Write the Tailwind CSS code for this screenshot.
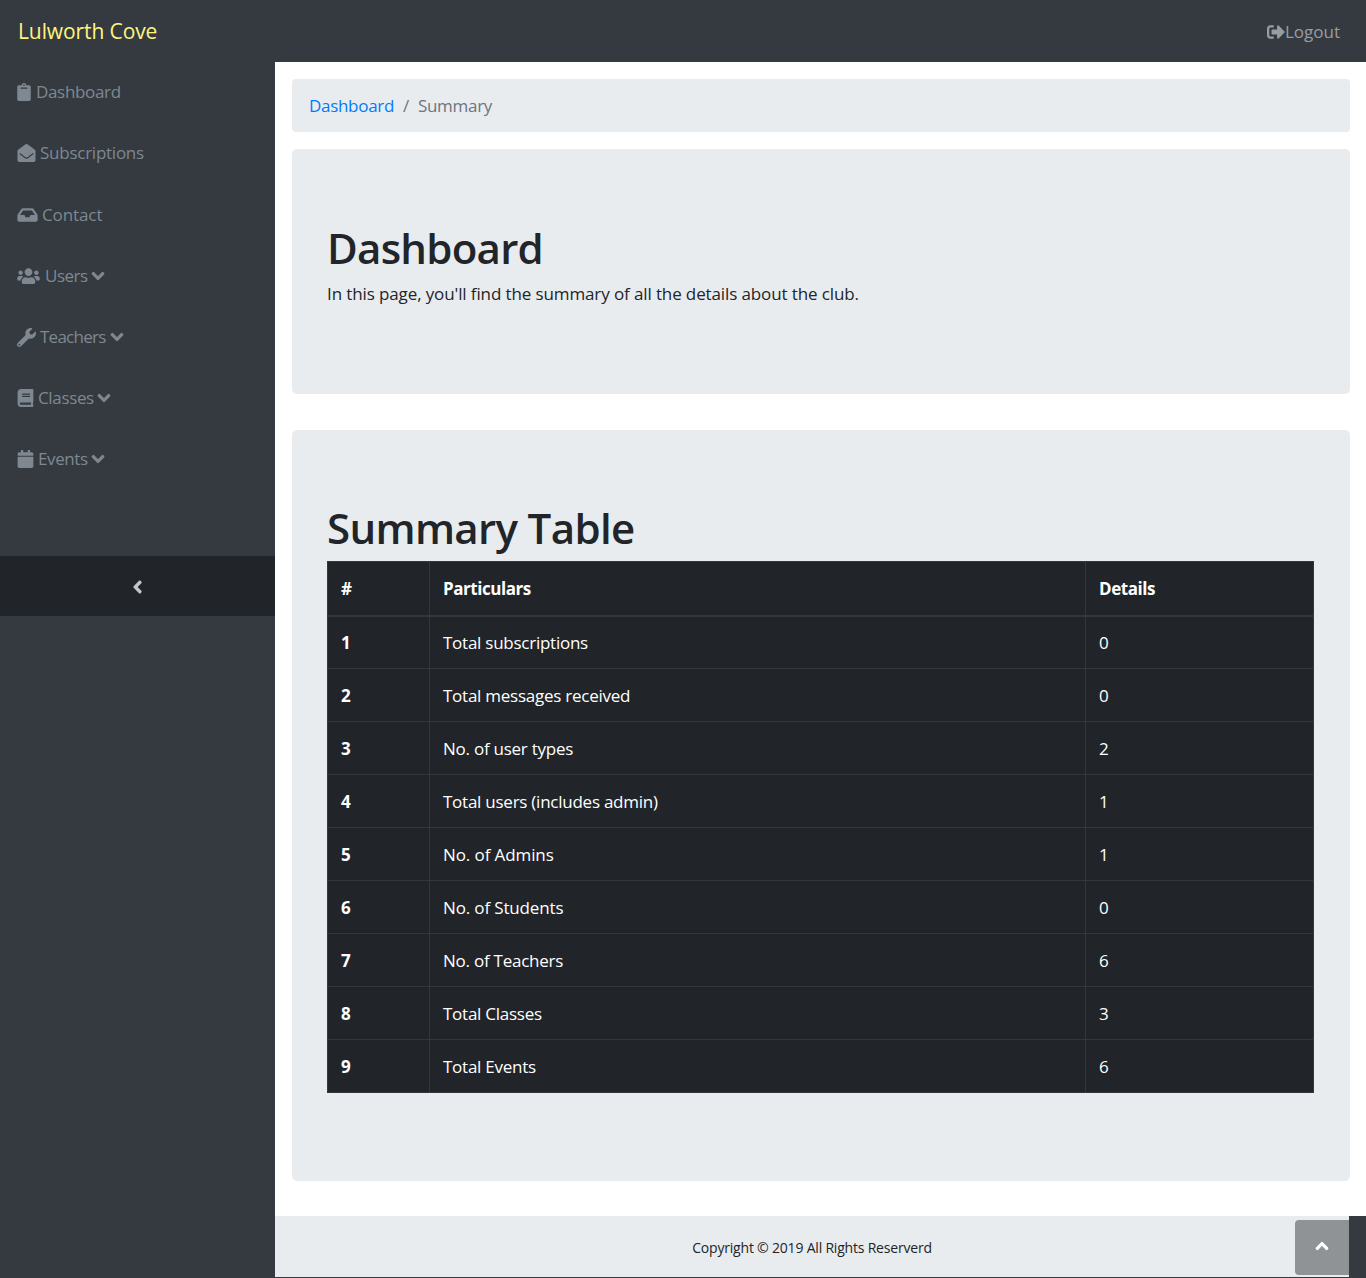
<!DOCTYPE html>
<html lang="en">
<head>
<meta charset="utf-8">
<title>Lulworth Cove</title>
<script src="https://cdn.jsdelivr.net/npm/@tailwindcss/browser@4"></script>
</head>
<body class="bg-[#343a40] font-['Open_Sans','Noto_Sans',sans-serif] text-[17px] text-[#212529] overflow-hidden">
<div class="w-[1366px] h-[1278px] flex flex-col">
  <header class="h-[62px] shrink-0 flex items-center justify-between pl-[18px] pr-[26px] bg-[#343a40]">
    <a class="text-[21px] mt-[2px] text-[#fff47f] tracking-[-0.1px]">Lulworth Cove</a>
    <a class="flex items-center text-[17px] mt-[1px] text-[#9a9da0] tracking-[0px]">
      <svg class="w-[18px] h-[18px] fill-[#9a9da0]" viewBox="0 0 512 512"><path d="M497 273L329 441c-15 15-41 4.5-41-17v-96H152c-13.3 0-24-10.7-24-24v-96c0-13.3 10.7-24 24-24h136V88c0-21.4 25.9-32 41-17l168 168c9.3 9.4 9.3 24.6 0 34zM192 436v-40c0-6.6-5.4-12-12-12H96c-17.7 0-32-14.3-32-32V160c0-17.7 14.3-32 32-32h84c6.6 0 12-5.4 12-12V76c0-6.6-5.4-12-12-12H96c-53 0-96 43-96 96v192c0 53 43 96 96 96h84c6.6 0 12-5.4 12-12z"/></svg>Logout</a>
  </header>
  <div class="flex flex-1 min-h-0">
    <aside class="w-[275px] shrink-0 bg-[#343a40] flex flex-col">
      <nav class="h-[494px] flex flex-col text-[17px] text-[#7f8890]">
        <a class="h-[60px] flex items-center gap-[5px] pl-[17px] tracking-[-0.33px]"><svg class="h-[18px] w-[14px] fill-[#7f8890]" viewBox="0 0 384 512"><path d="M384 112v352c0 26.51-21.49 48-48 48H48c-26.51 0-48-21.49-48-48V112c0-26.51 21.49-48 48-48h80c0-35.29 28.71-64 64-64s64 28.71 64 64h80c26.51 0 48 21.49 48 48zM192 40c-13.255 0-24 10.745-24 24s10.745 24 24 24 24-10.745 24-24-10.745-24-24-24m96 114v-20a6 6 0 0 0-6-6H102a6 6 0 0 0-6 6v20a6 6 0 0 0 6 6h180a6 6 0 0 0 6-6z"/></svg>Dashboard</a>
        <a class="h-[62px] flex items-center gap-[4px] pl-[17px] tracking-[-0.25px]"><svg class="h-[18px] w-[19px] fill-[#7f8890]" viewBox="0 0 512 512"><path d="M512 464c0 26.51-21.49 48-48 48H48c-26.51 0-48-21.49-48-48V200.724a48 48 0 0 1 18.387-37.776c24.913-19.529 45.501-35.365 164.2-121.511C199.412 29.17 232.797-.347 256 .003c23.198-.354 56.596 29.172 73.413 41.433 118.687 86.137 139.303 101.995 164.2 121.512A48 48 0 0 1 512 200.724V464zm-65.666-196.605c-2.563-3.728-7.7-4.595-11.339-1.907-22.845 16.873-55.462 40.705-105.582 77.079-16.825 12.266-50.21 41.781-73.413 41.43-23.211.344-56.559-29.143-73.413-41.43-50.114-36.37-82.734-60.204-105.582-77.079-3.639-2.688-8.776-1.821-11.339 1.907l-9.072 13.196a7.998 7.998 0 0 0 1.839 10.967c22.887 16.899 55.454 40.69 105.303 76.868 20.274 14.781 56.524 47.813 92.264 47.573 35.724.242 71.961-32.771 92.263-47.573 49.85-36.179 82.418-59.97 105.303-76.868a7.998 7.998 0 0 0 1.839-10.967l-9.071-13.196z"/></svg>Subscriptions</a>
        <a class="h-[62px] flex items-center gap-[4px] pl-[17px] tracking-[-0.1px]"><svg class="h-[18px] w-[21px] fill-[#7f8890]" viewBox="0 0 576 512"><path d="M567.938 243.908L462.25 85.374A48.003 48.003 0 0 0 422.311 64H153.689a48 48 0 0 0-39.938 21.374L8.062 243.908A47.994 47.994 0 0 0 0 270.533V400c0 26.51 21.49 48 48 48h480c26.51 0 48-21.49 48-48V270.533a47.994 47.994 0 0 0-8.062-26.625zM162.252 128h251.497l85.333 128H376l-32 64H232l-32-64H76.918l85.334-128z"/></svg>Contact</a>
        <a class="h-[60px] flex items-center pl-[17px] tracking-[-0.5px]"><svg class="h-[18px] w-[23px] fill-[#7f8890] mr-[5px]" viewBox="0 0 640 512"><path d="M96 224c35.3 0 64-28.7 64-64s-28.7-64-64-64-64 28.7-64 64 28.7 64 64 64zm448 0c35.3 0 64-28.7 64-64s-28.7-64-64-64-64 28.7-64 64 28.7 64 64 64zm32 32h-64c-17.6 0-33.5 7.1-45.1 18.6 40.3 22.1 68.9 62 75.1 109.4h66c17.7 0 32-14.3 32-32v-32c0-35.3-28.7-64-64-64zm-256 0c61.9 0 112-50.1 112-112S381.9 32 320 32 208 82.1 208 144s50.1 112 112 112zm76.8 32h-8.3c-20.8 10-43.9 16-68.5 16s-47.6-6-68.5-16h-8.3C179.6 288 128 339.6 128 403.2V432c0 26.5 21.5 48 48 48h288c26.5 0 48-21.5 48-48v-28.8c0-63.6-51.6-115.2-115.2-115.2zm-223.7-13.4C161.5 263.1 145.6 256 128 256H64c-35.3 0-64 28.7-64 64v32c0 17.7 14.3 32 32 32h65.9c6.3-47.4 34.9-87.3 75.2-109.4z"/></svg>Users<svg class="h-[14px] w-[12px] ml-[4px] fill-[#7f8890] stroke-[#7f8890] stroke-[40] overflow-visible" viewBox="0 0 448 512"><path d="M207.029 381.476L12.686 187.132c-9.373-9.373-9.373-24.569 0-33.941l22.667-22.667c9.357-9.357 24.522-9.375 33.901-.04L224 284.505l154.745-154.021c9.379-9.335 24.544-9.317 33.901.04l22.667 22.667c9.373 9.373 9.373 24.569 0 33.941L240.971 381.476c-9.373 9.372-24.569 9.372-33.942 0z"/></svg></a>
        <a class="h-[62px] flex items-center pl-[17px] tracking-[-0.75px]"><svg class="h-[19px] w-[19px] fill-[#7f8890] mr-[4px]" viewBox="0 0 512 512"><path d="M507.73 109.1c-2.24-9.03-13.54-12.09-20.12-5.51l-74.36 74.36-67.88-11.31-11.31-67.88 74.36-74.36c6.62-6.62 3.43-17.9-5.66-20.16-47.38-11.74-99.55.91-136.58 37.93-39.64 39.64-50.55 97.1-34.05 147.2L18.74 402.76c-24.99 24.99-24.99 65.51 0 90.5 24.99 24.99 65.51 24.99 90.5 0l213.21-213.21c50.12 16.71 107.47 5.68 147.37-34.22 37.07-37.07 49.7-89.32 37.91-136.73zM64 472c-13.25 0-24-10.75-24-24 0-13.26 10.75-24 24-24s24 10.74 24 24c0 13.25-10.75 24-24 24z"/></svg>Teachers<svg class="h-[14px] w-[12px] ml-[5px] fill-[#7f8890] stroke-[#7f8890] stroke-[40] overflow-visible" viewBox="0 0 448 512"><path d="M207.029 381.476L12.686 187.132c-9.373-9.373-9.373-24.569 0-33.941l22.667-22.667c9.357-9.357 24.522-9.375 33.901-.04L224 284.505l154.745-154.021c9.379-9.335 24.544-9.317 33.901.04l22.667 22.667c9.373 9.373 9.373 24.569 0 33.941L240.971 381.476c-9.373 9.372-24.569 9.372-33.942 0z"/></svg></a>
        <a class="h-[60px] flex items-center pl-[17px] tracking-[-0.35px]"><svg class="h-[18px] w-[17px] fill-[#7f8890] mr-[4px]" viewBox="0 0 448 512"><path d="M448 360V24c0-13.3-10.7-24-24-24H96C43 0 0 43 0 96v320c0 53 43 96 96 96h328c13.3 0 24-10.7 24-24v-16c0-7.5-3.5-14.3-8.9-18.7-4.2-15.4-4.2-59.3 0-74.7 5.4-4.3 8.9-11.1 8.9-18.6zM128 134c0-3.3 2.7-6 6-6h212c3.3 0 6 2.7 6 6v20c0 3.3-2.7 6-6 6H134c-3.3 0-6-2.7-6-6v-20zm0 64c0-3.3 2.7-6 6-6h212c3.3 0 6 2.7 6 6v20c0 3.3-2.7 6-6 6H134c-3.3 0-6-2.7-6-6v-20zm253.4 250H96c-17.7 0-32-14.3-32-32 0-17.6 14.4-32 32-32h285.4c-1.9 17.1-1.9 46.9 0 64z"/></svg>Classes<svg class="h-[14px] w-[12px] ml-[4px] fill-[#7f8890] stroke-[#7f8890] stroke-[40] overflow-visible" viewBox="0 0 448 512"><path d="M207.029 381.476L12.686 187.132c-9.373-9.373-9.373-24.569 0-33.941l22.667-22.667c9.357-9.357 24.522-9.375 33.901-.04L224 284.505l154.745-154.021c9.379-9.335 24.544-9.317 33.901.04l22.667 22.667c9.373 9.373 9.373 24.569 0 33.941L240.971 381.476c-9.373 9.372-24.569 9.372-33.942 0z"/></svg></a>
        <a class="h-[62px] flex items-center pl-[17px] tracking-[-0.4px]"><svg class="h-[18px] w-[17px] fill-[#7f8890] mr-[4px]" viewBox="0 0 448 512"><path d="M12 192h424c6.6 0 12 5.4 12 12v260c0 26.5-21.5 48-48 48H48c-26.5 0-48-21.5-48-48V204c0-6.6 5.4-12 12-12zm436-44v-36c0-26.5-21.5-48-48-48h-48V12c0-6.6-5.4-12-12-12h-40c-6.6 0-12 5.4-12 12v52H160V12c0-6.6-5.4-12-12-12h-40c-6.6 0-12 5.4-12 12v52H48C21.5 64 0 85.5 0 112v36c0 6.6 5.4 12 12 12h424c6.6 0 12-5.4 12-12z"/></svg>Events<svg class="h-[14px] w-[12px] ml-[4px] fill-[#7f8890] stroke-[#7f8890] stroke-[40] overflow-visible" viewBox="0 0 448 512"><path d="M207.029 381.476L12.686 187.132c-9.373-9.373-9.373-24.569 0-33.941l22.667-22.667c9.357-9.357 24.522-9.375 33.901-.04L224 284.505l154.745-154.021c9.379-9.335 24.544-9.317 33.901.04l22.667 22.667c9.373 9.373 9.373 24.569 0 33.941L240.971 381.476c-9.373 9.372-24.569 9.372-33.942 0z"/></svg></a>
      </nav>
      <button class="h-[60px] bg-[#212529] flex items-center justify-center"><svg class="w-[9px] h-[14px] mt-[2px] fill-[#c6c8ca] stroke-[#c6c8ca] stroke-[40] overflow-visible" viewBox="0 0 320 512"><path d="M34.52 239.03L228.87 44.69c9.37-9.37 24.57-9.37 33.94 0l22.67 22.67c9.36 9.36 9.37 24.52.04 33.9L131.49 256l154.02 154.75c9.34 9.38 9.32 24.54-.04 33.9l-22.67 22.67c-9.37 9.37-24.57 9.37-33.94 0L34.52 272.97c-9.37-9.37-9.37-24.57 0-33.94z"/></svg></button>
    </aside>
    <div class="flex-1 min-w-0 flex flex-col">
      <main class="h-[1154px] bg-white pt-[17px] pl-[17px] pr-[16px]">
        <div class="h-[53px] bg-[#e9ecef] rounded-[4px] flex items-center px-[17px] gap-[9px] text-[#6c757d] tracking-[-0.3px]">
          <a class="text-[#007bff]">Dashboard</a><span>/</span><span>Summary</span>
        </div>
        <section class="mt-[17px] h-[245px] bg-[#e9ecef] rounded-[5px] pt-[70px] px-[35px]">
          <h1 class="text-[42px] leading-[58px] font-semibold tracking-[-0.75px]">Dashboard</h1>
          <p class="text-[17px] leading-[26px] mt-[4px] tracking-[-0.115px]">In this page, you'll find the summary of all the details about the club.</p>
        </section>
        <section class="mt-[36px] h-[751px] bg-[#e9ecef] rounded-[5px] pt-[70px] px-[35px]">
          <h2 class="text-[42px] leading-[56px] h-[61px] font-semibold tracking-[-0.65px]">Summary Table</h2>
          <table class="w-[987px] border-collapse table-fixed bg-[#212529] text-white text-[17px] tracking-[-0.25px]">
            <thead>
              <tr class="h-[54px] text-left tracking-[-0.45px]">
                <th class="w-[102px] border border-[#32383e] border-b-2 px-[13px] font-bold">#</th>
                <th class="w-[656px] border border-[#32383e] border-b-2 px-[13px] font-bold">Particulars</th>
                <th class="border border-[#32383e] border-b-2 px-[13px] font-bold">Details</th>
              </tr>
            </thead>
            <tbody>
              <tr class="h-[53px]"><th class="border border-[#32383e] px-[13px] text-left font-bold">1</th><td class="border border-[#32383e] px-[13px]">Total subscriptions</td><td class="border border-[#32383e] px-[13px]">0</td></tr>
              <tr class="h-[53px]"><th class="border border-[#32383e] pt-[1px] px-[13px] text-left font-bold">2</th><td class="border border-[#32383e] pt-[1px] px-[13px]">Total messages received</td><td class="border border-[#32383e] pt-[1px] px-[13px]">0</td></tr>
              <tr class="h-[53px]"><th class="border border-[#32383e] pt-[1px] px-[13px] text-left font-bold">3</th><td class="border border-[#32383e] pt-[1px] px-[13px]">No. of user types</td><td class="border border-[#32383e] pt-[1px] px-[13px]">2</td></tr>
              <tr class="h-[53px]"><th class="border border-[#32383e] pt-[1px] px-[13px] text-left font-bold">4</th><td class="border border-[#32383e] pt-[1px] px-[13px]">Total users (includes admin)</td><td class="border border-[#32383e] pt-[1px] px-[13px]">1</td></tr>
              <tr class="h-[53px]"><th class="border border-[#32383e] pt-[1px] px-[13px] text-left font-bold">5</th><td class="border border-[#32383e] pt-[1px] px-[13px] tracking-[-0.1px]">No. of Admins</td><td class="border border-[#32383e] pt-[1px] px-[13px]">1</td></tr>
              <tr class="h-[53px]"><th class="border border-[#32383e] pt-[1px] px-[13px] text-left font-bold">6</th><td class="border border-[#32383e] pt-[1px] px-[13px] tracking-[-0.15px]">No. of Students</td><td class="border border-[#32383e] pt-[1px] px-[13px]">0</td></tr>
              <tr class="h-[53px]"><th class="border border-[#32383e] pt-[1px] px-[13px] text-left font-bold">7</th><td class="border border-[#32383e] pt-[1px] px-[13px]">No. of Teachers</td><td class="border border-[#32383e] pt-[1px] px-[13px]">6</td></tr>
              <tr class="h-[53px]"><th class="border border-[#32383e] pt-[1px] px-[13px] text-left font-bold">8</th><td class="border border-[#32383e] pt-[1px] px-[13px]">Total Classes</td><td class="border border-[#32383e] pt-[1px] px-[13px]">3</td></tr>
              <tr class="h-[53px]"><th class="border border-[#32383e] pt-[1px] px-[13px] text-left font-bold">9</th><td class="border border-[#32383e] pt-[1px] px-[13px]">Total Events</td><td class="border border-[#32383e] pt-[1px] px-[13px]">6</td></tr>
            </tbody>
          </table>
        </section>
      </main>
      <footer class="relative h-[61px] mr-[17px] bg-[#e9ecef] flex items-center justify-center text-[14px] tracking-[-0.2px] text-[#212529]">
        <span class="mt-[1px]">Copyright © 2019 All Rights Reserverd</span>
        <a class="absolute right-0 top-[4px] w-[54px] h-[55px] bg-[#8f9396] rounded-l-[4px] flex items-center justify-center"><svg class="w-[12px] h-[14px] mb-[4px] fill-white stroke-white stroke-[40] overflow-visible" viewBox="0 0 448 512"><path d="M240.971 130.524l194.343 194.343c9.373 9.373 9.373 24.569 0 33.941l-22.667 22.667c-9.357 9.357-24.522 9.375-33.901.04L224 227.495 69.255 381.516c-9.379 9.335-24.544 9.317-33.901-.04l-22.667-22.667c-9.373-9.373-9.373-24.569 0-33.941L207.03 130.525c9.372-9.373 24.568-9.373 33.941-.001z"/></svg></a>
      </footer>
    </div>
  </div>
</div>
</body>
</html>
